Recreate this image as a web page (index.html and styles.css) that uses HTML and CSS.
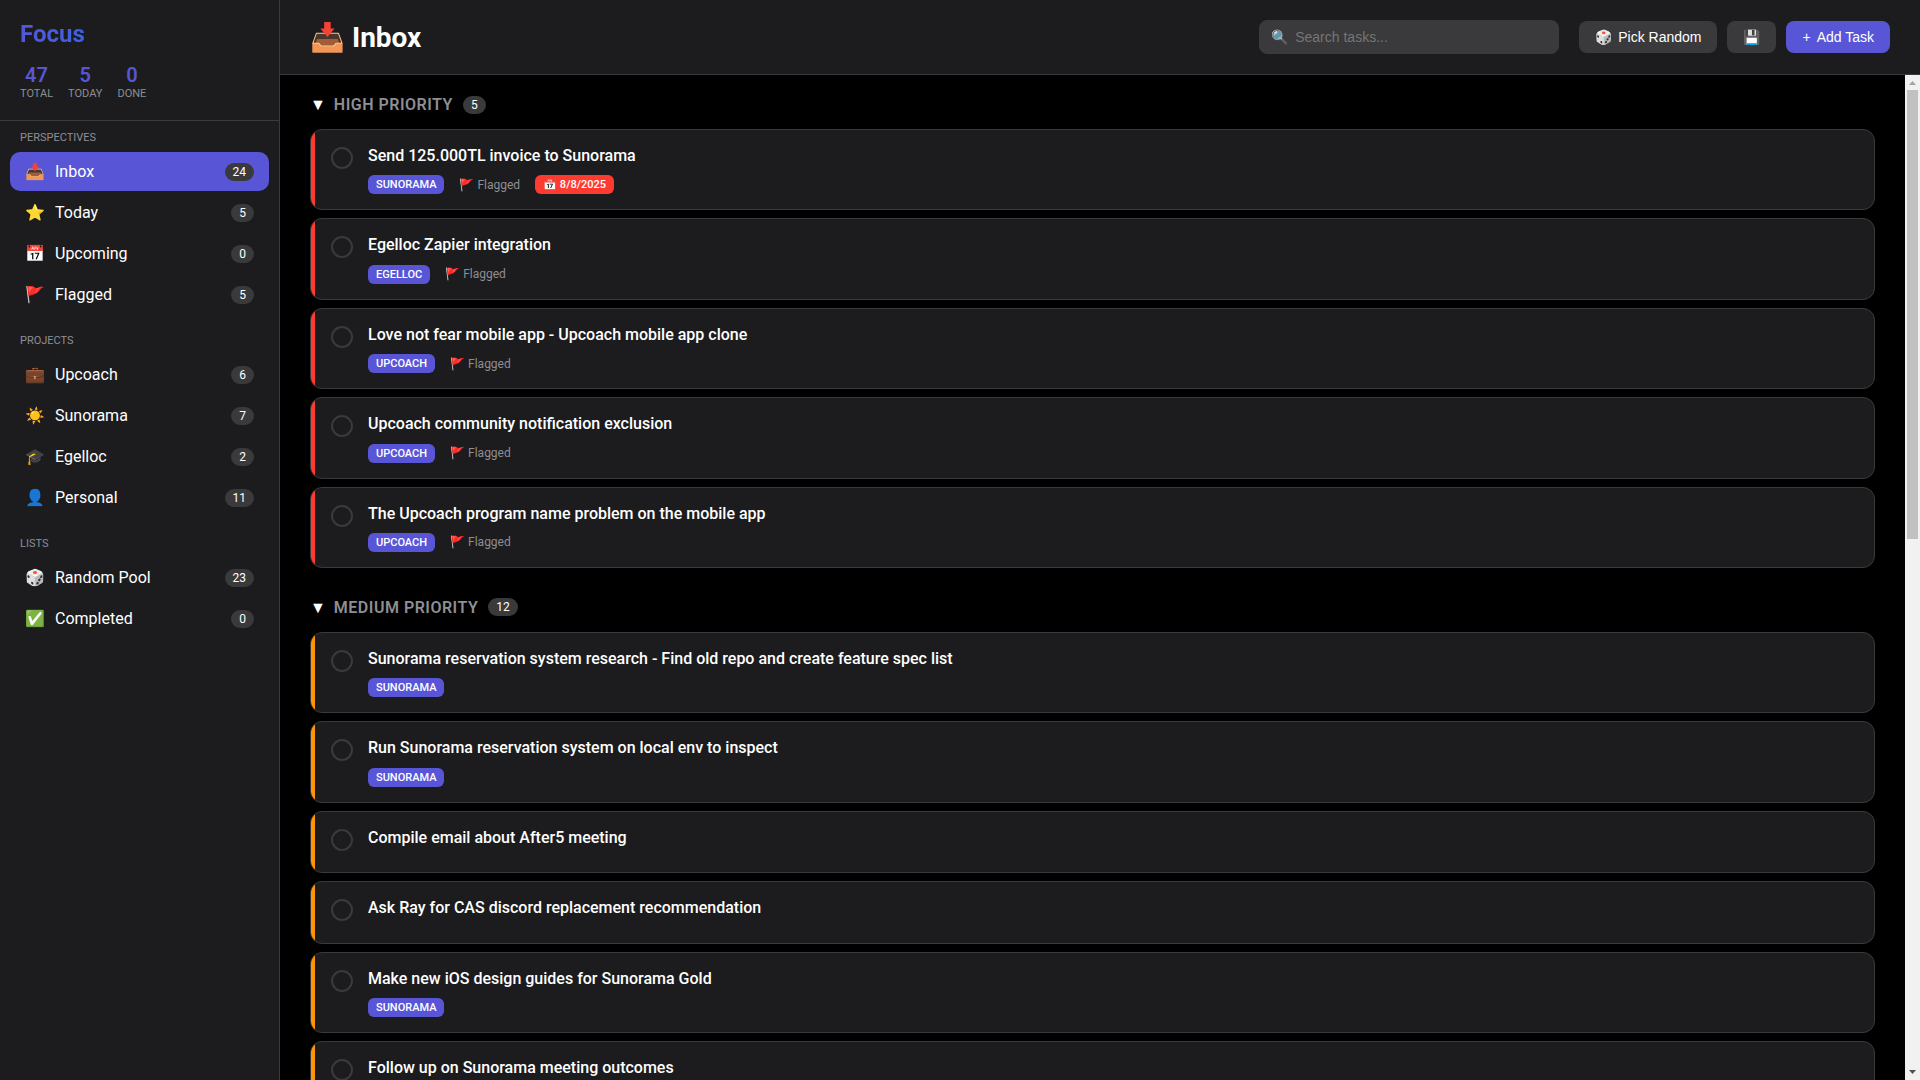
FILE: index.html
```
<!DOCTYPE html>
<html lang="en">
<head>
    <meta charset="UTF-8">
    <meta name="viewport" content="width=device-width, initial-scale=1.0">
    <title>Focus</title>
    <link rel="stylesheet" href="styles.css">
</head>
<body>
    <div class="app">
        <aside class="sidebar">
            <div class="sidebar-header">
                <div class="logo">Focus</div>
                <div class="stats">
                    <div class="stat"><span class="stat-number">47</span><span class="stat-label">Total</span></div>
                    <div class="stat"><span class="stat-number">5</span><span class="stat-label">Today</span></div>
                    <div class="stat"><span class="stat-number">0</span><span class="stat-label">Done</span></div>
                </div>
            </div>

            <nav class="nav">
                <div class="nav-section">
                    <div class="nav-title">Perspectives</div>
                    <a href="#inbox" class="nav-item active"><span class="nav-icon">📥</span><span class="nav-text">Inbox</span><span class="count">24</span></a>
                    <a href="#today" class="nav-item"><span class="nav-icon">⭐</span><span class="nav-text">Today</span><span class="count">5</span></a>
                    <a href="#upcoming" class="nav-item"><span class="nav-icon">📅</span><span class="nav-text">Upcoming</span><span class="count">0</span></a>
                    <a href="#flagged" class="nav-item"><span class="nav-icon">🚩</span><span class="nav-text">Flagged</span><span class="count">5</span></a>
                </div>

                <div class="nav-section">
                    <div class="nav-title">Projects</div>
                    <a href="#upcoach" class="nav-item"><span class="nav-icon">💼</span><span class="nav-text">Upcoach</span><span class="count">6</span></a>
                    <a href="#sunorama" class="nav-item"><span class="nav-icon">☀️</span><span class="nav-text">Sunorama</span><span class="count">7</span></a>
                    <a href="#egelloc" class="nav-item"><span class="nav-icon">🎓</span><span class="nav-text">Egelloc</span><span class="count">2</span></a>
                    <a href="#personal" class="nav-item"><span class="nav-icon">👤</span><span class="nav-text">Personal</span><span class="count">11</span></a>
                </div>

                <div class="nav-section">
                    <div class="nav-title">Lists</div>
                    <a href="#random" class="nav-item"><span class="nav-icon">🎲</span><span class="nav-text">Random Pool</span><span class="count">23</span></a>
                    <a href="#completed" class="nav-item"><span class="nav-icon">✅</span><span class="nav-text">Completed</span><span class="count">0</span></a>
                </div>
            </nav>
        </aside>

        <main class="main">
            <header class="header">
                <h1 class="header-title">📥 Inbox</h1>
                <div class="header-actions">
                    <div class="search">
                        <label for="search" class="search-icon">🔍</label>
                        <input type="text" id="search" class="search-input" placeholder="Search tasks...">
                    </div>
                    <div class="buttons">
                        <button type="button" class="btn"><span>🎲</span><span>Pick Random</span></button>
                        <button type="button" class="btn"><span>💾</span></button>
                        <button type="button" class="btn btn-primary"><span>+</span><span>Add Task</span></button>
                    </div>
                </div>
            </header>

            <div class="content">
                <div class="task-list">
                    <section class="group high">
                        <div class="group-header">
                            <span class="group-arrow">▼</span>
                            <h2 class="group-title">High Priority</h2>
                            <span class="count">5</span>
                        </div>

                        <div class="task">
                            <input type="checkbox" class="task-check" id="task1">
                            <div class="task-body">
                                <label class="task-title" for="task1">Send 125.000TL invoice to Sunorama</label>
                                <div class="task-meta">
                                    <span class="tag">SUNORAMA</span>
                                    <span class="flag">🚩 Flagged</span>
                                    <span class="tag overdue">📅 8/8/2025</span>
                                </div>
                            </div>
                        </div>
                        <div class="task">
                            <input type="checkbox" class="task-check" id="task2">
                            <div class="task-body">
                                <label class="task-title" for="task2">Egelloc Zapier integration</label>
                                <div class="task-meta">
                                    <span class="tag">EGELLOC</span>
                                    <span class="flag">🚩 Flagged</span>
                                </div>
                            </div>
                        </div>
                        <div class="task">
                            <input type="checkbox" class="task-check" id="task3">
                            <div class="task-body">
                                <label class="task-title" for="task3">Love not fear mobile app - Upcoach mobile app clone</label>
                                <div class="task-meta">
                                    <span class="tag">UPCOACH</span>
                                    <span class="flag">🚩 Flagged</span>
                                </div>
                            </div>
                        </div>
                        <div class="task">
                            <input type="checkbox" class="task-check" id="task4">
                            <div class="task-body">
                                <label class="task-title" for="task4">Upcoach community notification exclusion</label>
                                <div class="task-meta">
                                    <span class="tag">UPCOACH</span>
                                    <span class="flag">🚩 Flagged</span>
                                </div>
                            </div>
                        </div>
                        <div class="task">
                            <input type="checkbox" class="task-check" id="task5">
                            <div class="task-body">
                                <label class="task-title" for="task5">The Upcoach program name problem on the mobile app</label>
                                <div class="task-meta">
                                    <span class="tag">UPCOACH</span>
                                    <span class="flag">🚩 Flagged</span>
                                </div>
                            </div>
                        </div>
                    </section>

                    <section class="group medium">
                        <div class="group-header">
                            <span class="group-arrow">▼</span>
                            <h2 class="group-title">Medium Priority</h2>
                            <span class="count">12</span>
                        </div>

                        <div class="task">
                            <input type="checkbox" class="task-check" id="task6">
                            <div class="task-body">
                                <label class="task-title" for="task6">Sunorama reservation system research - Find old repo and create feature spec list</label>
                                <div class="task-meta">
                                    <span class="tag">SUNORAMA</span>
                                </div>
                            </div>
                        </div>
                        <div class="task">
                            <input type="checkbox" class="task-check" id="task7">
                            <div class="task-body">
                                <label class="task-title" for="task7">Run Sunorama reservation system on local env to inspect</label>
                                <div class="task-meta">
                                    <span class="tag">SUNORAMA</span>
                                </div>
                            </div>
                        </div>
                        <div class="task">
                            <input type="checkbox" class="task-check" id="task8">
                            <div class="task-body">
                                <label class="task-title" for="task8">Compile email about After5 meeting</label>
                                <div class="task-meta"></div>
                            </div>
                        </div>
                        <div class="task">
                            <input type="checkbox" class="task-check" id="task9">
                            <div class="task-body">
                                <label class="task-title" for="task9">Ask Ray for CAS discord replacement recommendation</label>
                                <div class="task-meta"></div>
                            </div>
                        </div>
                        <div class="task">
                            <input type="checkbox" class="task-check" id="task10">
                            <div class="task-body">
                                <label class="task-title" for="task10">Make new iOS design guides for Sunorama Gold</label>
                                <div class="task-meta">
                                    <span class="tag">SUNORAMA</span>
                                </div>
                            </div>
                        </div>
                        <div class="task">
                            <input type="checkbox" class="task-check" id="task11">
                            <div class="task-body">
                                <label class="task-title" for="task11">Follow up on Sunorama meeting outcomes</label>
                                <div class="task-meta"></div>
                            </div>
                        </div>
                    </section>
                </div>

                <div class="scrollbar" aria-hidden="true">
                    <svg class="scroll-arrow" viewBox="0 0 15 15"><path d="M4 10h7L7.5 6z" fill="#a3a3a3"/></svg>
                    <div class="scroll-track"><div class="scroll-thumb"></div></div>
                    <svg class="scroll-arrow" viewBox="0 0 15 15"><path d="M4 5h7L7.5 9z" fill="#505050"/></svg>
                </div>
            </div>
        </main>
    </div>
</body>
</html>
```

FILE: styles.css
```
* {
    margin: 0;
    padding: 0;
    box-sizing: border-box;
}
body {
    font-family: Roboto, sans-serif;
    background: #000;
    color: #fff;
    overflow: hidden;
}
.app {
    display: flex;
    height: 100vh;
}

/* Sidebar */
.sidebar {
    width: 280px;
    flex-shrink: 0;
    background: #1c1c1e;
    border-right: 1px solid #3a3a3c;
    overflow-y: auto;
}
.sidebar-header {
    padding: 20px;
    border-bottom: 1px solid #3a3a3c;
}
.logo {
    font-size: 24px;
    font-weight: 700;
    line-height: 28px;
    margin-bottom: 15px;
    background: linear-gradient(135deg, #5856d6, #007aff);
    -webkit-background-clip: text;
    background-clip: text;
    color: transparent;
}
.stats {
    display: flex;
    gap: 15px;
}
.stat {
    display: flex;
    flex-direction: column;
    align-items: center;
}
.stat-number {
    font-size: 20px;
    font-weight: 600;
    line-height: 24px;
    color: #5856d6;
}
.stat-label {
    font-size: 11px;
    line-height: 13px;
    color: #8e8e93;
    text-transform: uppercase;
}
.nav {
    padding: 10px;
}
.nav-section {
    margin-bottom: 20px;
}
.nav-title {
    padding: 0 10px;
    margin-bottom: 8px;
    font-size: 11px;
    line-height: 13px;
    color: #8e8e93;
    text-transform: uppercase;
}
.nav-item {
    display: flex;
    align-items: center;
    gap: 10px;
    padding: 10px 15px;
    margin-bottom: 2px;
    border-radius: 10px;
    line-height: 19px;
    color: #fff;
    text-decoration: none;
}
.nav-item:last-child {
    margin-bottom: 0;
}
.nav-item.active {
    background: #5856d6;
}
.nav-icon {
    width: 20px;
    display: flex;
    justify-content: center;
}
.nav-text {
    flex: 1;
}
.count {
    padding: 2px 8px;
    border-radius: 10px;
    background: #3a3a3c;
    font-size: 12px;
    line-height: 14px;
}

/* Header */
.main {
    flex: 1;
    min-width: 0;
    display: flex;
    flex-direction: column;
}
.header {
    display: flex;
    align-items: center;
    justify-content: space-between;
    padding: 20px 30px;
    background: #1c1c1e;
    border-bottom: 1px solid #3a3a3c;
}
.header-title {
    font-size: 28px;
    font-weight: 700;
}
.header-actions {
    display: flex;
    align-items: center;
    gap: 20px;
}
.search {
    position: relative;
    width: 300px;
}
.search-icon {
    position: absolute;
    left: 12px;
    top: 9px;
    font-size: 14px;
    line-height: 16px;
    color: #8e8e93;
}
.search-input {
    display: block;
    width: 100%;
    padding: 8px 12px 8px 35px;
    border: 1px solid #3a3a3c;
    border-radius: 8px;
    background: #3a3a3c;
    color: #fff;
    font-family: "Liberation Sans", Arial, sans-serif;
    font-size: 14px;
    line-height: 16px;
}
.buttons {
    display: flex;
    gap: 10px;
}
.btn {
    display: flex;
    align-items: center;
    gap: 6px;
    padding: 8px 16px;
    border: none;
    border-radius: 8px;
    background: #3a3a3c;
    color: #fff;
    font-family: "Liberation Sans", Arial, sans-serif;
    font-size: 14px;
    line-height: 16px;
    cursor: pointer;
}
.btn-primary {
    background: #5856d6;
}

/* Task list */
.content {
    flex: 1;
    min-height: 0;
    display: flex;
}
.task-list {
    flex: 1;
    min-width: 0;
    padding: 20px 30px;
    overflow: hidden;
}
.group {
    margin-bottom: 30px;
}
.group-header {
    display: flex;
    align-items: center;
    margin-bottom: 15px;
}
.group-arrow {
    margin-right: 8px;
    font-size: 16px;
    line-height: 19px;
}
.group-title {
    margin-right: 10px;
    font-size: 16px;
    font-weight: 600;
    line-height: 19px;
    letter-spacing: 0.5px;
    color: #8e8e93;
    text-transform: uppercase;
}
.task {
    position: relative;
    display: flex;
    align-items: flex-start;
    gap: 15px;
    padding: 15px 20px;
    margin-bottom: 8px;
    border: 1px solid #3a3a3c;
    border-radius: 12px;
    background: #1c1c1e;
    overflow: hidden;
}
.task:last-child {
    margin-bottom: 0;
}
.task::before {
    content: "";
    position: absolute;
    left: 0;
    top: 0;
    bottom: 0;
    width: 4px;
}
.high .task::before {
    background: #ff3b30;
}
.medium .task::before {
    background: #ff9500;
}
.task-check {
    appearance: none;
    width: 22px;
    height: 22px;
    margin-top: 2px;
    flex-shrink: 0;
    border: 2px solid #3a3a3c;
    border-radius: 50%;
    cursor: pointer;
}
.task-check:checked {
    background: #5856d6;
    border-color: #5856d6;
}
.task-body {
    flex: 1;
}
.task-title {
    display: block;
    margin-bottom: 8px;
    font-size: 16px;
    font-weight: 500;
    line-height: 1.4;
}
.task-meta {
    display: flex;
    align-items: center;
    gap: 15px;
}
.tag {
    padding: 3px 8px;
    border-radius: 6px;
    background: #5856d6;
    font-size: 11px;
    font-weight: 500;
    line-height: 13px;
}
.tag.overdue {
    background: #ff3b30;
}
.flag {
    font-size: 12px;
    line-height: 14px;
    color: #8e8e93;
}

/* Scrollbar */
.scrollbar {
    width: 15px;
    flex-shrink: 0;
    display: flex;
    flex-direction: column;
    background: #f1f1f1;
}
.scroll-arrow {
    width: 15px;
    height: 15px;
    flex-shrink: 0;
}
.scroll-track {
    flex: 1;
    padding: 0 2px;
}
.scroll-thumb {
    height: 46%;
    background: #c1c1c1;
}
```
